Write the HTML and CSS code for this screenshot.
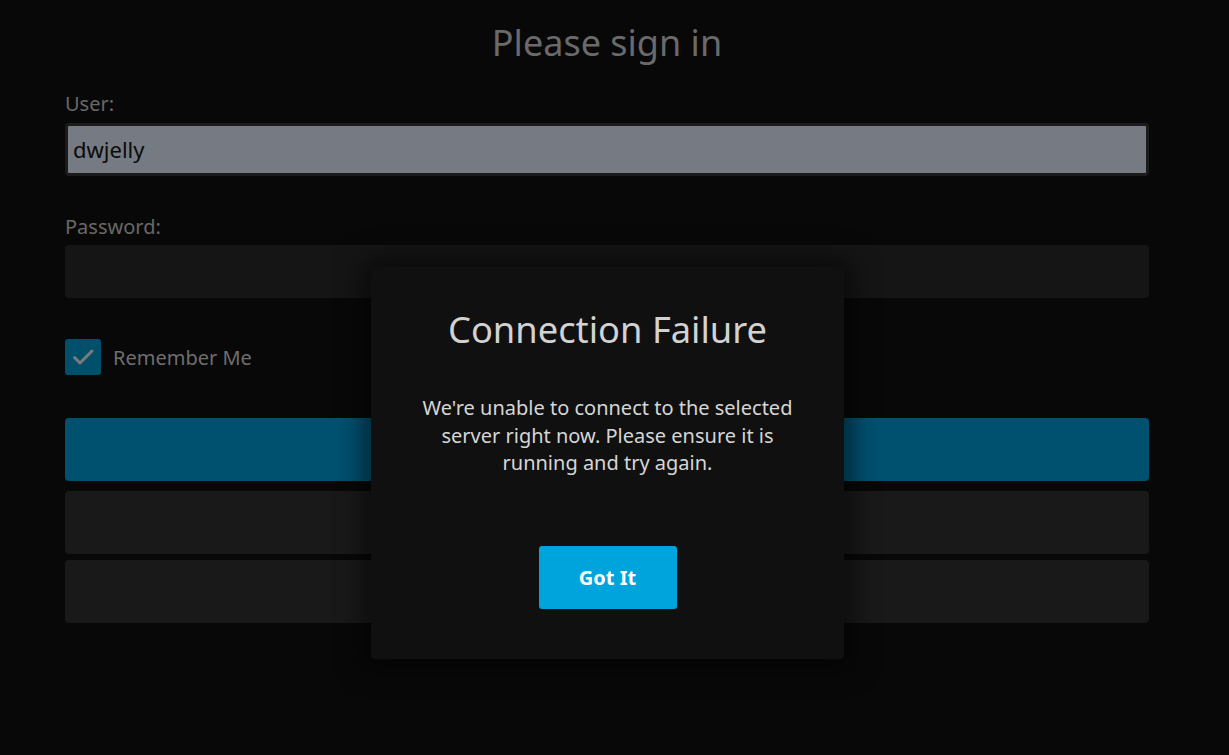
FILE: index.html
```html
<!DOCTYPE html>
<html>
<head>
<meta charset="utf-8">
<link rel="stylesheet" href="styles.css">
</head>
<body>
<div class="page">
  <form class="login">
    <h1 class="title">Please sign in</h1>
    <label class="label">User:</label>
    <div class="input input-user">dwjelly</div>
    <label class="label label-pass">Password:</label>
    <div class="input input-pass"></div>
    <div class="remember">
      <span class="checkbox">
        <svg width="36" height="36" viewBox="0 0 36 36"><polyline points="9.5,18.5 15,24 27,12" fill="none" stroke="#7b7b7b" stroke-width="3" stroke-linecap="round" stroke-linejoin="round"/></svg>
      </span>
      <span class="remember-text">Remember Me</span>
    </div>
    <div class="btn btn-signin"></div>
    <div class="btn btn-alt btn-second"></div>
    <div class="btn btn-alt btn-third"></div>
  </form>
</div>
<div class="dialog">
  <h2 class="dialog-title">Connection Failure</h2>
  <p class="dialog-text">We're unable to connect to the selected server right now. Please ensure it is running and try again.</p>
  <div class="dialog-actions">
    <button class="got-it">Got It</button>
  </div>
</div>
</body>
</html>
```
FILE: styles.css
```css
html, body {
  margin: 0;
  padding: 0;
  height: 100%;
}
body {
  background: #080808;
  font-family: "Noto Sans", "Open Sans", sans-serif;
  overflow: hidden;
}
.page {
  padding-left: 65px;
}
.login {
  width: 1084px;
  display: flex;
  flex-direction: column;
}
.title {
  margin: 0;
  padding-top: 23px;
  font-size: 36px;
  font-weight: 400;
  line-height: 40px;
  color: #6a6a6a;
  text-align: center;
}
.label {
  margin-top: 29px;
  font-size: 20px;
  line-height: 24px;
  color: #686868;
}
.label-pass {
  margin-top: 39px;
}
.input {
  margin-top: 7px;
  height: 53px;
  box-sizing: border-box;
  border-radius: 4px;
}
.input-user {
  margin-top: 7px;
  background: #767a82;
  border: 3px solid #1b1b1b;
  font-size: 22px;
  line-height: 47px;
  padding-left: 5px;
  color: #0b0b0b;
}
.input-pass {
  margin-top: 6px;
  background: #151515;
}
.remember {
  margin-top: 41px;
  display: flex;
  align-items: center;
  gap: 12px;
}
.checkbox {
  width: 36px;
  height: 36px;
  border-radius: 3px;
  background: #00506b;
  display: flex;
}
.remember-text {
  font-size: 20px;
  color: #6e6e6e;
  line-height: 24px;
  padding-top: 2px;
}
.btn {
  height: 63px;
  border-radius: 4px;
}
.btn-signin {
  margin-top: 43px;
  background: #005170;
}
.btn-alt {
  background: #191919;
}
.btn-second {
  margin-top: 10px;
}
.btn-third {
  margin-top: 6px;
}
.dialog {
  position: absolute;
  left: 371px;
  top: 267px;
  width: 473px;
  height: 392px;
  box-sizing: border-box;
  background: #101010;
  border-radius: 4px;
  padding: 40px 40px 0;
  box-shadow: 0 0 28px 8px rgba(0, 0, 0, 0.55);
  text-align: center;
}
.dialog-title {
  margin: 0;
  font-size: 36.3px;
  font-weight: 400;
  line-height: 45px;
  color: #d2d2d2;
}
.dialog-text {
  margin: 42px 0 0;
  font-size: 20px;
  line-height: 27.5px;
  color: #d6d6d6;
}
.dialog-actions {
  margin-top: 69px;
  display: flex;
  justify-content: center;
}
.got-it {
  width: 138px;
  height: 63px;
  border: 0;
  border-radius: 3px;
  background: #00a4dc;
  color: #ffffff;
  font-family: "Noto Sans", "Open Sans", sans-serif;
  font-size: 20px;
  font-weight: 700;
  padding: 0;
}
```
